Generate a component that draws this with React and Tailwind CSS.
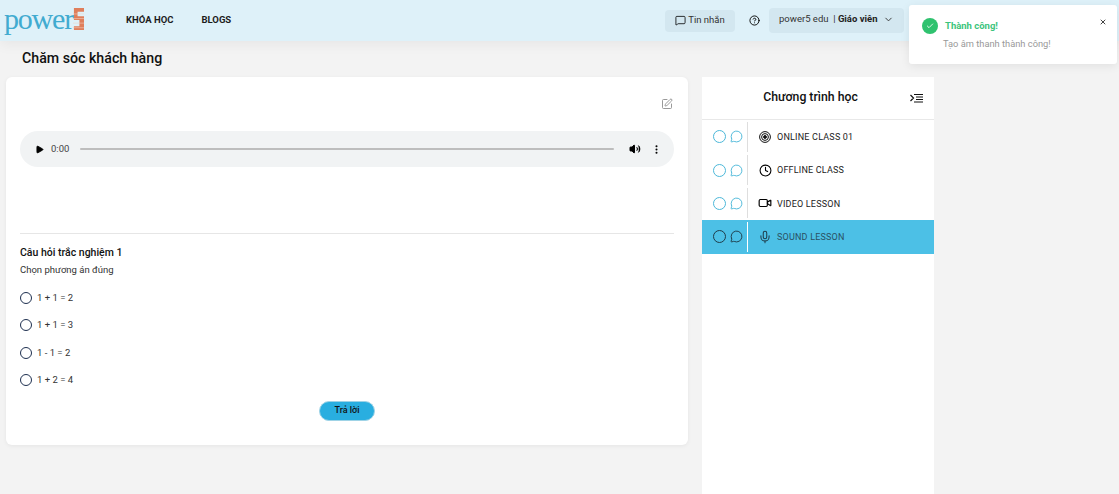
import {
  ChevronDown,
  CircleHelp,
  Clock,
  EllipsisVertical,
  MessageCircle,
  Mic,
  Play,
  SquarePen,
  Check,
  X,
  Video,
  Volume2,
  MessageSquare,
} from "lucide-react";

const lessons = [
  { title: "ONLINE CLASS 01", icon: "target" },
  { title: "OFFLINE CLASS", icon: "clock" },
  { title: "VIDEO LESSON", icon: "video" },
  { title: "SOUND LESSON", icon: "mic", active: true },
];

const answers = ["1 + 1 = 2", "1 + 1 = 3", "1 - 1 = 2", "1 + 2 = 4"];

const LessonIcon = ({ name }) => {
  if (name === "clock") return <Clock className="h-[13px] w-[13px] text-black" strokeWidth={2} />;
  if (name === "video") return <Video className="h-[14px] w-[14px] text-black" strokeWidth={2} />;
  if (name === "mic") return <Mic className="h-[14px] w-[14px] text-[#1f3c4a]" strokeWidth={1.75} />;
  return (
    <svg viewBox="0 0 12 12" className="h-[12px] w-[12px]" fill="none" stroke="#111" strokeWidth="1">
      <circle cx="6" cy="6" r="5.4" />
      <circle cx="6" cy="6" r="3.4" />
      <circle cx="6" cy="6" r="1.4" fill="#111" />
    </svg>
  );
};

const Logo = () => (
  <div className="flex h-[26px] w-[80px] shrink-0 items-start justify-between">
    <span className="-mt-[1px] font-['Liberation_Serif',serif] text-[30px] leading-[24px] tracking-[-1.2px] text-[#41abd0]">
      power
    </span>
    <svg width="12" height="24" viewBox="0 0 12 24" className="-mt-[1px]">
      <path d="M1 0h11v4H5v5h7v15H1v-4h6v-7H1z" fill="#df7f5c" />
      <path d="M0 6.5h12M0 11.5h12M0 16.5h12M0 21.5h12" stroke="#f3d3c4" strokeWidth="0.6" />
    </svg>
  </div>
);

const Header = () => (
  <header className="flex h-[41px] shrink-0 items-center bg-[#def1f9] pl-[4px] shadow-[0_4px_12px_rgba(0,0,0,0.05)]">
    <Logo />
    <nav className="ml-[42px] flex w-[105px] shrink-0 items-center gap-[28px] whitespace-nowrap text-[9.5px] font-bold text-[#1c1c1c]">
      <a>KHÓA HỌC</a>
      <a>BLOGS</a>
    </nav>
    <button className="ml-[434px] flex h-[22px] w-[70px] items-center justify-center gap-[2px] rounded-[4px] bg-[#d3e7f0] text-[9.5px] text-[#333]">
      <MessageSquare className="h-[11px] w-[11px] text-black" strokeWidth={1.75} />
      Tin nhắn
    </button>
    <CircleHelp className="ml-[14px] h-[11px] w-[11px] text-black" strokeWidth={2} />
    <button className="ml-[9px] flex h-[25px] w-[135px] items-center rounded-[4px] bg-[#d3e7f0] pb-[2px] pl-[10px] text-[9.5px] text-[#333]">
      power5 edu&nbsp; |&nbsp; <b className="text-[#222]">Giáo viên</b>
      <ChevronDown className="ml-[6px] h-[11px] w-[11px]" />
    </button>
  </header>
);

const AudioBar = () => (
  <div className="mt-[14px] flex h-[36px] items-center rounded-full bg-[#f1f3f4] pl-[15px] pr-[12px]">
    <Play className="h-[9px] w-[9px] fill-black text-black" />
    <span className="ml-[7px] text-[9.5px] text-[#444]">0:00</span>
    <div className="ml-[11px] h-[2px] flex-1 rounded bg-[#bdbdbd]" />
    <Volume2 className="ml-[15px] h-[12px] w-[12px] fill-black text-black" strokeWidth={2} />
    <EllipsisVertical className="ml-[10px] h-[11px] w-[11px] text-black" strokeWidth={2.5} />
  </div>
);

const MainCard = () => (
  <section className="h-[368px] w-[682px] shrink-0 rounded-[6px] bg-white px-[14px] pt-[21px] shadow-[0_1px_4px_rgba(0,0,0,0.06)]">
    <div className="flex justify-end pr-[1px]">
      <SquarePen className="h-[12px] w-[12px] text-[#8a8a8a]" strokeWidth={1.75} />
    </div>
    <div className="pt-[7px]">
      <AudioBar />
    </div>
    <div className="mt-[66px] border-t border-[#e6e6e6] pt-[11px]">
      <h3 className="text-[10.5px] leading-[15px] font-medium text-[#111]">Câu hỏi trắc nghiệm 1</h3>
      <p className="mt-[3px] text-[9.5px] leading-[13px] text-[#333]">Chọn phương án đúng</p>
      <ul className="mt-[16px] flex flex-col gap-[15.33px]">
        {answers.map((answer) => (
          <li key={answer} className="flex h-[12px] items-center gap-[5px] text-[9.5px] text-[#333]">
            <span className="h-[12px] w-[12px] rounded-full border border-[#1e3050]" />
            {answer}
          </li>
        ))}
      </ul>
      <div className="mt-[15px] flex justify-center">
        <button className="h-[20px] w-[56px] rounded-full border border-[#9fd3e6] bg-[#29aee0] text-[9px] font-medium text-[#111]">
          Trả lời
        </button>
      </div>
    </div>
  </section>
);

const Sidebar = () => (
  <aside className="h-[417px] w-[232px] shrink-0 bg-white">
    <div className="relative flex h-[43px] items-center justify-center border-b border-[#e8e8e8]">
      <h2 className="pb-[2px] pr-[15px] text-[12.25px] font-medium text-[#111]">Chương trình học</h2>
      <svg viewBox="0 0 13 10" className="absolute right-[11px] top-[16px] h-[10px] w-[13px]" fill="none" stroke="#111" strokeWidth="1.2">
        <path d="M0.5 2l3 3-3 3M4 1.5h9M6 4h7M6 6.5h7M4 9h9" />
      </svg>
    </div>
    <ul>
      {lessons.map((lesson) => (
        <li
          key={lesson.title}
          className={`flex h-[33.4px] items-center ${lesson.active ? "bg-[#4cc0e6]" : ""}`}
        >
          <div
            className={`flex h-[30px] w-[46px] items-center gap-[4px] border-r pl-[11px] ${
              lesson.active ? "border-white text-[#1f3c4a]" : "border-[#dedede] text-[#4cb8d9]"
            }`}
          >
            <span className="h-[13px] w-[13px] shrink-0 rounded-full border-[1.5px] border-current" />
            <MessageCircle className="h-[13px] w-[13px] shrink-0" strokeWidth={1.75} />
          </div>
          <div className="ml-[10px] flex w-[14px] justify-center">
            <LessonIcon name={lesson.icon} />
          </div>
          <span className={`ml-[5px] pt-[2px] text-[9px] tracking-[0.2px] ${lesson.active ? "text-[#2a5163]" : "text-[#222]"}`}>
            {lesson.title}
          </span>
        </li>
      ))}
    </ul>
  </aside>
);

const Toast = () => (
  <div className="absolute right-[2px] top-[5px] flex h-[59px] w-[208px] rounded-[3px] bg-white pl-[13px] pt-[13px] shadow-[0_2px_10px_rgba(0,0,0,0.08)]">
    <span className="flex h-[16px] w-[16px] items-center justify-center rounded-full bg-[#2fc26f]">
      <Check className="h-[8px] w-[8px] text-white" strokeWidth={2.5} />
    </span>
    <div className="ml-[7px]">
      <p className="pt-[1px] text-[9.5px] leading-[14px] font-bold text-[#3cc47c]">Thành công!</p>
      <p className="mt-[5px] -ml-[2px] text-[9.3px] leading-[12px] text-[#999]">Tạo âm thanh thành công!</p>
    </div>
    <X className="absolute right-[10px] top-[13px] h-[8px] w-[8px] text-[#444]" strokeWidth={3} />
  </div>
);

export default function App() {
  return (
    <div className="relative flex h-[494px] w-[1119px] flex-col overflow-hidden bg-[#f3f3f3] font-['Roboto',sans-serif]">
      <Header />
      <h1 className="ml-[22px] mt-[8px] text-[14.2px] leading-[19px] font-medium text-[#111]">Chăm sóc khách hàng</h1>
      <div className="mt-[9px] flex gap-[14px] pl-[6px]">
        <MainCard />
        <Sidebar />
      </div>
      <Toast />
    </div>
  );
}
